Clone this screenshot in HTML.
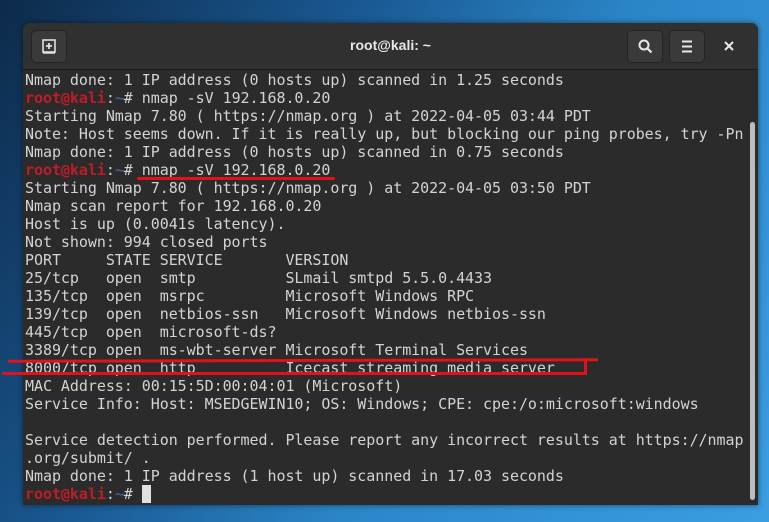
<!DOCTYPE html>
<html><head><meta charset="utf-8"><style>
html,body{margin:0;padding:0}
body{width:769px;height:522px;overflow:hidden;position:relative;background:linear-gradient(120deg,#0d2a4a 0%,#1a5a94 35%,#2b86c8 60%,#3a9ee0 100%);font-family:"Liberation Sans",sans-serif}
.win{position:absolute;left:23px;top:23px;width:735px;height:482px;background:#2b2b2b;border-radius:7px 7px 0 0;overflow:hidden;box-shadow:0 0 6px rgba(0,0,0,.5)}
.tb{position:absolute;left:0;top:0;width:100%;height:46px;background:#303030;border-bottom:1px solid #1c1c1c}
.title{position:absolute;left:0;right:0;top:14px;text-align:center;color:#e8e8e8;font-size:14px;font-weight:bold}
.btn{position:absolute;top:7px;width:34px;height:31px;background:#3a3a3a;border-radius:5px;border:1px solid #242424}
.term{position:absolute;left:2px;top:48px;font-family:"DejaVu Sans Mono","Liberation Mono",monospace;font-size:15px;line-height:18px;letter-spacing:-0.05px;color:#d3d3d3;white-space:pre}
.r{color:#c01c28;font-weight:bold}.b{color:#3f6f9f}
.sb{position:absolute;left:727px;top:99px;width:5px;height:378px;background:#bdbdbd;border-radius:3px}
.red{position:absolute;background:#e3121a}
</style></head><body>
<div class="win">
<div class="tb">
<div class="btn" style="left:8px"><svg width="34" height="31" viewBox="0 0 34 31"><rect x="11" y="9" width="12" height="12" fill="none" stroke="#e0e0e0" stroke-width="1.6"/><path d="M17 12v6M14 15h6" stroke="#e0e0e0" stroke-width="1.8"/><path d="M11 22h12" stroke="#e0e0e0" stroke-width="1.6"/></svg></div>
<div class="title">root@kali: ~</div>
<div class="btn" style="left:604px"><svg width="34" height="31" viewBox="0 0 34 31"><circle cx="16" cy="14" r="4.5" fill="none" stroke="#e8e8e8" stroke-width="2"/><path d="M19.5 17.5l4 4" stroke="#e8e8e8" stroke-width="2.2"/></svg></div>
<div class="btn" style="left:646px"><svg width="34" height="31" viewBox="0 0 34 31"><path d="M12 10.5h10M12 15.5h10M12 20.5h10" stroke="#e8e8e8" stroke-width="2"/></svg></div>
<svg style="position:absolute;left:700px;top:17px" width="12" height="12" viewBox="0 0 12 12"><path d="M2 2l8 8M10 2l-8 8" stroke="#e8e8e8" stroke-width="2"/></svg>
</div>
<div class="term">Nmap done: 1 IP address (0 hosts up) scanned in 1.25 seconds
<span class="r">root@kali</span>:<span class="b">~</span># nmap -sV 192.168.0.20
Starting Nmap 7.80 ( https://nmap.org ) at 2022-04-05 03:44 PDT
Note: Host seems down. If it is really up, but blocking our ping probes, try -Pn
Nmap done: 1 IP address (0 hosts up) scanned in 0.75 seconds
<span class="r">root@kali</span>:<span class="b">~</span># nmap -sV 192.168.0.20
Starting Nmap 7.80 ( https://nmap.org ) at 2022-04-05 03:50 PDT
Nmap scan report for 192.168.0.20
Host is up (0.0041s latency).
Not shown: 994 closed ports
PORT     STATE SERVICE       VERSION
25/tcp   open  smtp          SLmail smtpd 5.5.0.4433
135/tcp  open  msrpc         Microsoft Windows RPC
139/tcp  open  netbios-ssn   Microsoft Windows netbios-ssn
445/tcp  open  microsoft-ds?
3389/tcp open  ms-wbt-server Microsoft Terminal Services
8000/tcp open  http          Icecast streaming media server
MAC Address: 00:15:5D:00:04:01 (Microsoft)
Service Info: Host: MSEDGEWIN10; OS: Windows; CPE: cpe:/o:microsoft:windows

Service detection performed. Please report any incorrect results at https://nmap
.org/submit/ .
Nmap done: 1 IP address (1 host up) scanned in 17.03 seconds
<span class="r">root@kali</span>:<span class="b">~</span># <span style="background:#e0e0e0">&nbsp;</span></div>
<div class="sb"></div>
</div>
<div class="red" style="left:137px;top:177px;width:198px;height:3px;border-radius:2px"></div>
<div class="red" style="left:8px;top:359px;width:590px;height:3px;transform:rotate(-0.15deg)"></div>
<div class="red" style="left:2px;top:372px;width:585px;height:3px"></div>
<div class="red" style="left:584px;top:360px;width:3px;height:15px"></div>
</body></html>
